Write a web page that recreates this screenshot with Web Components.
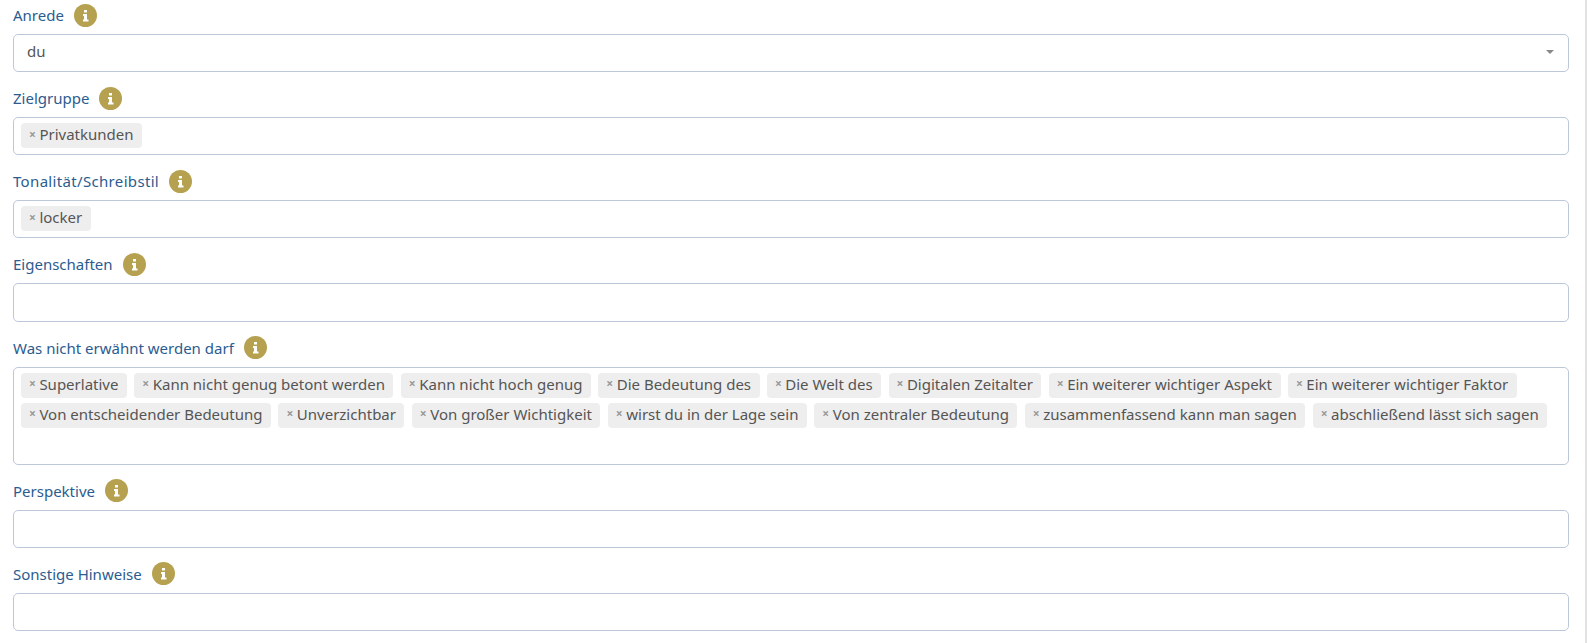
<!DOCTYPE html>
<html lang="de">
<head>
<meta charset="utf-8">
<title>Formular</title>
<style>
  html, body { margin: 0; background: #fff; }
  body {
    font-family: "Noto Sans", "Open Sans", sans-serif;
    font-size: 15px;
    color: #555;
  }
</style>
</head>
<body>
<form-page>
  <form-field label="Anrede"><select-box value="du"></select-box></form-field>
  <form-field label="Zielgruppe"><tag-box><tag-chip>Privatkunden</tag-chip></tag-box></form-field>
  <form-field label="Tonalität/Schreibstil" style="letter-spacing: .33px"><tag-box style="letter-spacing: 0"><tag-chip>locker</tag-chip></tag-box></form-field>
  <form-field label="Eigenschaften"><tag-box style="min-height: 38.4px"></tag-box></form-field>
  <form-field label="Was nicht erwähnt werden darf">
    <tag-box tall>
      <tag-chip>Superlative</tag-chip>
      <tag-chip>Kann nicht genug betont werden</tag-chip>
      <tag-chip>Kann nicht hoch genug</tag-chip>
      <tag-chip>Die Bedeutung des</tag-chip>
      <tag-chip>Die Welt des</tag-chip>
      <tag-chip>Digitalen Zeitalter</tag-chip>
      <tag-chip>Ein weiterer wichtiger Aspekt</tag-chip>
      <tag-chip>Ein weiterer wichtiger Faktor</tag-chip>
      <tag-chip>Von entscheidender Bedeutung</tag-chip>
      <tag-chip>Unverzichtbar</tag-chip>
      <tag-chip>Von großer Wichtigkeit</tag-chip>
      <tag-chip>wirst du in der Lage sein</tag-chip>
      <tag-chip>Von zentraler Bedeutung</tag-chip>
      <tag-chip>zusammenfassend kann man sagen</tag-chip>
      <tag-chip>abschließend lässt sich sagen</tag-chip>
    </tag-box>
  </form-field>
  <form-field label="Perspektive"><tag-box></tag-box></form-field>
  <form-field label="Sonstige Hinweise"><tag-box></tag-box></form-field>
</form-page>

<script>
class FormPage extends HTMLElement {
  constructor() {
    super();
    this.attachShadow({ mode: 'open' });
    this.shadowRoot.innerHTML = `
      <style>
        :host {
          display: flex;
          flex-direction: column;
          gap: 14.1px;
          box-sizing: border-box;
          height: 643px;
          padding: 3px 16px 0 13px;
          border-right: 2px solid #e2e2e2;
          overflow: hidden;
        }
      </style>
      <slot></slot>
    `;
  }
}

class FormField extends HTMLElement {
  constructor() {
    super();
    this.attachShadow({ mode: 'open' });
    this.shadowRoot.innerHTML = `
      <style>
        :host { display: block; }
        header {
          display: flex;
          align-items: center;
          gap: 10px;
          height: 24px;
          margin-bottom: 7px;
          color: #2b5c8f;
        }
        svg { width: 23px; height: 23px; display: block; }
      </style>
      <header>
        <span class="text"></span>
        <svg viewBox="0 0 23 23" aria-hidden="true">
          <circle cx="11.5" cy="11.5" r="11.5" fill="#b5a14f"/>
          <path fill="#fff" d="M10 6h3v2.500h-3zM9 10h4v5.500h1.500V17.500h-5.500v-2H10V12H9z"/>
        </svg>
      </header>
      <slot></slot>
    `;
  }
  connectedCallback() {
    this.shadowRoot.querySelector('.text').textContent = this.getAttribute('label');
  }
}

class SelectBox extends HTMLElement {
  constructor() {
    super();
    this.attachShadow({ mode: 'open' });
    this.shadowRoot.innerHTML = `
      <style>
        :host {
          display: flex;
          align-items: center;
          justify-content: space-between;
          box-sizing: border-box;
          height: 38px;
          padding: 0 13px 4px;
          border: 1px solid #bcc8da;
          border-radius: 5px;
          background: #fff;
        }
        i {
          width: 0;
          height: 0;
          margin-right: 1px;
          transform: translateY(1px);
          border-left: 4px solid transparent;
          border-right: 4px solid transparent;
          border-top: 4px solid #888;
        }
      </style>
      <span class="value"></span>
      <i></i>
    `;
  }
  connectedCallback() {
    this.shadowRoot.querySelector('.value').textContent = this.getAttribute('value');
  }
}

class TagBox extends HTMLElement {
  constructor() {
    super();
    this.attachShadow({ mode: 'open' });
    this.shadowRoot.innerHTML = `
      <style>
        :host {
          display: flex;
          flex-wrap: wrap;
          align-content: flex-start;
          gap: 5px 7.4px;
          box-sizing: border-box;
          min-height: 38px;
          padding: 5px 7px;
          border: 1px solid #bcc8da;
          border-radius: 5px;
          background: #fff;
        }
        :host([tall]) { height: 98px; }
      </style>
      <slot></slot>
    `;
  }
}

class TagChip extends HTMLElement {
  constructor() {
    super();
    this.attachShadow({ mode: 'open' });
    this.shadowRoot.innerHTML = `
      <style>
        :host {
          display: inline-flex;
          align-items: center;
          box-sizing: border-box;
          height: 25px;
          padding: 0 8.5px 3px 8px;
          border-radius: 4px;
          background: #eee;
          white-space: nowrap;
        }
        b { font-weight: 700; color: #999; font-size: 12px; margin-right: 3.5px; }
      </style>
      <b>×</b><slot></slot>
    `;
  }
}

customElements.define('form-page', FormPage);
customElements.define('form-field', FormField);
customElements.define('select-box', SelectBox);
customElements.define('tag-box', TagBox);
customElements.define('tag-chip', TagChip);
</script>
</body>
</html>
